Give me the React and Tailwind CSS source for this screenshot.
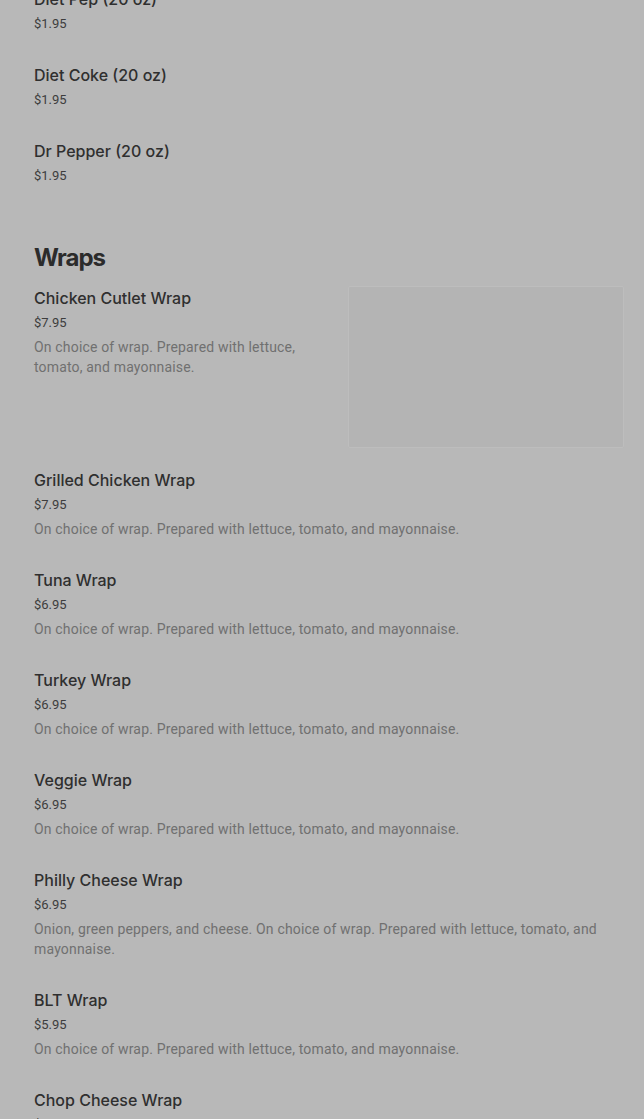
const drinks = [
  { name: 'Diet Pep (20 oz)', price: '$1.95' },
  { name: 'Diet Coke (20 oz)', price: '$1.95' },
  { name: 'Dr Pepper (20 oz)', price: '$1.95' },
];

const basic = 'On choice of wrap. Prepared with lettuce, tomato, and mayonnaise.';

const wraps = [
  { name: 'Grilled Chicken Wrap', price: '$7.95', desc: basic },
  { name: 'Tuna Wrap', price: '$6.95', desc: basic },
  { name: 'Turkey Wrap', price: '$6.95', desc: basic },
  { name: 'Veggie Wrap', price: '$6.95', desc: basic },
  { name: 'Philly Cheese Wrap', price: '$6.95', desc: 'Onion, green peppers, and cheese. On choice of wrap. Prepared with lettuce, tomato, and mayonnaise.' },
  { name: 'BLT Wrap', price: '$5.95', desc: basic },
  { name: 'Chop Cheese Wrap', price: '$6.95', desc: basic },
];

const titleCls = "text-[16px] leading-[24px] font-medium text-[#2f2f2f] font-['Inter',sans-serif]";
const priceCls = 'mt-[3px] text-[13px] leading-[20px] text-[#3d3d3d]';
const descCls = 'mt-[4px] text-[14px] leading-[20px] tracking-[0.17px] text-[#707070]';

function Item({ name, price, desc }) {
  return (
    <div className="pb-[29px]">
      <div className={titleCls}>{name}</div>
      <div className={priceCls}>{price}</div>
      {desc && <div className={descCls}>{desc}</div>}
    </div>
  );
}

export default function App() {
  return (
    <div className="h-[1119px] bg-[#b8b8b8] overflow-hidden font-['Roboto',sans-serif]">
      <div className="pl-[34px] pr-[20px] -mt-[13px]">
        {drinks.map((d) => (
          <div key={d.name} className="pb-[29px]">
            <div className={titleCls}>{d.name}</div>
            <div className={priceCls}>{d.price}</div>
          </div>
        ))}

        <h2 className="mt-[27px] text-[24px] leading-[32px] font-bold tracking-[-1px] text-[#2b2b2b] font-['Inter',sans-serif]">Wraps</h2>

        <div className="mt-[12px] flex gap-[38px] pb-[20px]">
          <div className="flex-1">
            <div className={titleCls}>Chicken Cutlet Wrap</div>
            <div className={priceCls}>$7.95</div>
            <div className={descCls}>{basic}</div>
          </div>
          <div className="w-[276px] h-[162px] shrink-0 rounded-[2px] border border-[#bdbdbd] bg-[#b4b4b4]" />
        </div>

        {wraps.map((w) => (
          <Item key={w.name} {...w} />
        ))}
      </div>
    </div>
  );
}
